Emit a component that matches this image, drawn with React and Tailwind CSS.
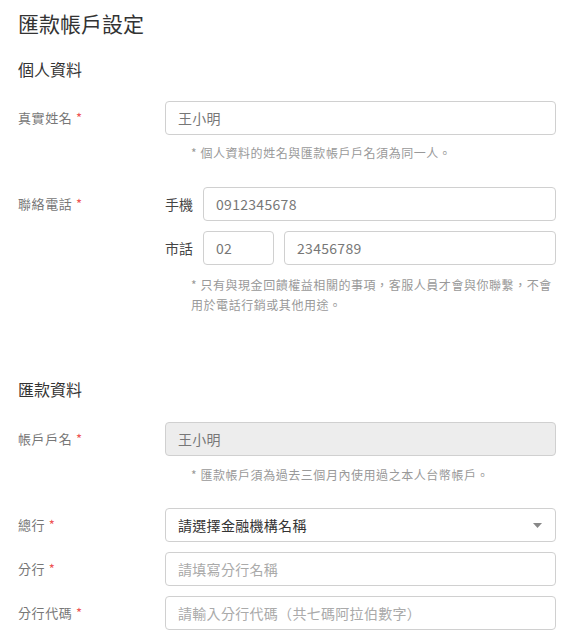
import React from "react";

const font = { fontFamily: '"Noto Sans CJK TC", "Noto Sans", sans-serif' };

function Label({ children }) {
  return (
    <div className="w-[147px] shrink-0 text-[13px] tracking-[0.6px] text-[#777]">
      {children} <span className="text-[#e55]">*</span>
    </div>
  );
}

function Input({ value, placeholder, disabled, className = "" }) {
  return (
    <div
      className={
        "h-[34px] flex items-center px-[12px] rounded-[4px] border border-[#d0d0d0] text-[14px] tracking-[0.3px] " +
        (disabled ? "bg-[#ededed] " : "bg-white ") +
        (value ? "text-[#777] " : "text-[#aaa] ") +
        className
      }
    >
      {value || placeholder}
    </div>
  );
}

function Note({ children }) {
  return (
    <div className="ml-[173px] text-[12px] leading-[20px] tracking-[0.55px] text-[#999]">{children}</div>
  );
}

export default function App() {
  return (
    <div className="w-[570px] h-[633px] bg-white pl-[18px] pr-[14px] pt-[8px] overflow-hidden" style={font}>
      <h1 className="text-[21px] leading-[30px] text-[#333] font-normal">匯款帳戶設定</h1>
      <h2 className="mt-[19px] text-[16px] leading-[24px] text-[#333] font-normal">個人資料</h2>

      <div className="mt-[20px] flex items-center">
        <Label>真實姓名</Label>
        <Input value="王小明" className="flex-1" />
      </div>
      <div className="mt-[8px]">
        <Note>* 個人資料的姓名與匯款帳戶戶名須為同一人。</Note>
      </div>

      <div className="mt-[24px] flex items-start">
        <div className="h-[34px] flex items-center">
          <Label>聯絡電話</Label>
        </div>
        <div className="flex-1 flex flex-col gap-[10px]">
          <div className="flex items-center">
            <div className="w-[38px] text-[14px] text-[#444]">手機</div>
            <Input value="0912345678" className="flex-1 px-[10px] text-[13px] tracking-[0.2px]" />
          </div>
          <div className="flex items-center">
            <div className="w-[38px] text-[14px] text-[#444]">市話</div>
            <Input value="02" className="w-[71px] px-[10px] text-[13px]" />
            <Input value="23456789" className="flex-1 ml-[10px] px-[10px] text-[13px]" />
          </div>
        </div>
      </div>
      <div className="mt-[10px]">
        <Note>
          * 只有與現金回饋權益相關的事項，客服人員才會與你聯繫，不會
          <br />
          用於電話行銷或其他用途。
        </Note>
      </div>

      <h2 className="mt-[62px] text-[16px] leading-[24px] text-[#333] font-normal">匯款資料</h2>

      <div className="mt-[21px] flex items-center">
        <Label>帳戶戶名</Label>
        <Input value="王小明" disabled className="flex-1" />
      </div>
      <div className="mt-[9px]">
        <Note>* 匯款帳戶須為過去三個月內使用過之本人台幣帳戶。</Note>
      </div>

      <div className="mt-[23px] flex items-center">
        <Label>總行</Label>
        <div className="flex-1 h-[34px] flex items-center justify-between pl-[12px] pr-[13px] rounded-[4px] border border-[#d0d0d0] bg-white text-[14px] tracking-[0.3px] text-[#333]">
          <span>請選擇金融機構名稱</span>
          <svg width="9" height="5" viewBox="0 0 9 5">
            <path d="M0 0 L9 0 L4.5 5 Z" fill="#888" />
          </svg>
        </div>
      </div>
      <div className="mt-[10px] flex items-center">
        <Label>分行</Label>
        <Input placeholder="請填寫分行名稱" className="flex-1" />
      </div>
      <div className="mt-[10px] flex items-center">
        <Label>分行代碼</Label>
        <Input placeholder="請輸入分行代碼（共七碼阿拉伯數字）" className="flex-1" />
      </div>
    </div>
  );
}
